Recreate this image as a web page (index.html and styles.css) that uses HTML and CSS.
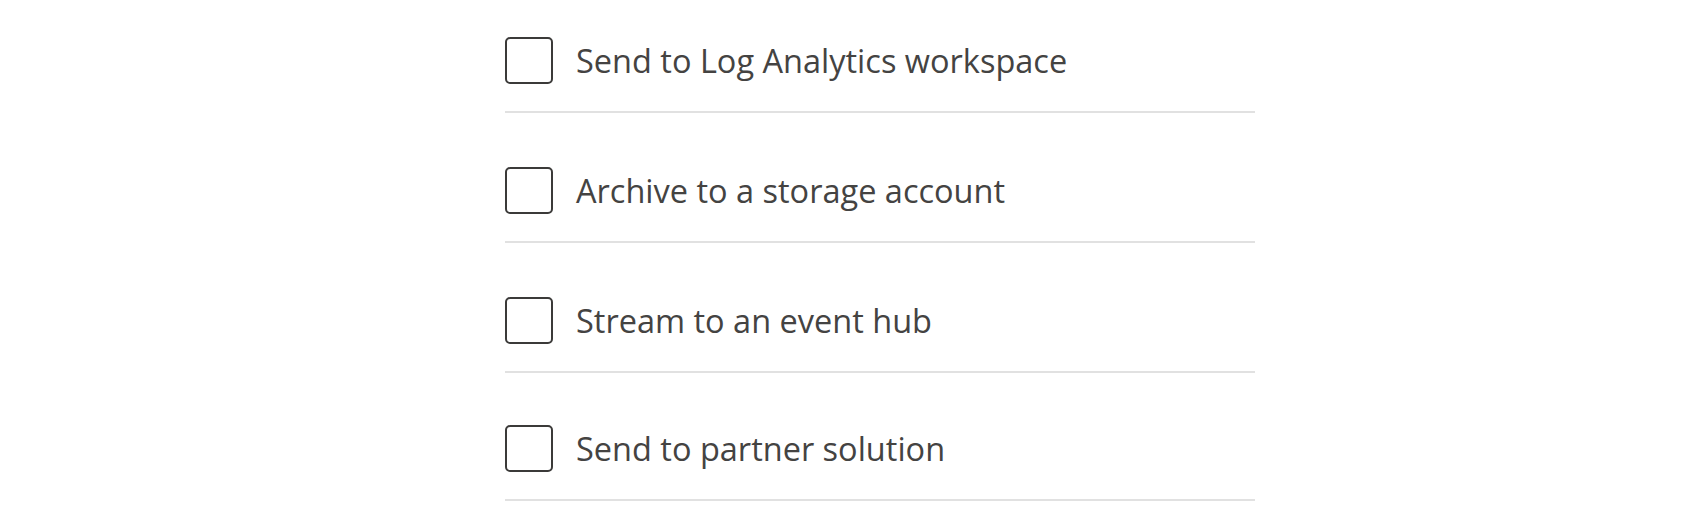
FILE: index.html
```html
<!DOCTYPE html>
<html lang="en">
<head>
  <meta charset="UTF-8">
  <meta name="viewport" content="width=device-width, initial-scale=1.0">
  <title>Destination details</title>
  <link rel="stylesheet" href="styles.css">
</head>
<body>
  <div class="destinations">
    <label class="option">
      <span class="box"></span>
      <span class="label-text">Send to Log Analytics workspace</span>
    </label>
    <label class="option">
      <span class="box"></span>
      <span class="label-text">Archive to a storage account</span>
    </label>
    <label class="option">
      <span class="box"></span>
      <span class="label-text">Stream to an event hub</span>
    </label>
    <label class="option">
      <span class="box"></span>
      <span class="label-text">Send to partner solution</span>
    </label>
  </div>
</body>
</html>
```

FILE: styles.css
```css
body {
  font-family: "Open Sans", "Noto Sans", sans-serif;
  background-color: #fff;
  color: #444342;
  margin: 0;
  padding: 0;
}

.destinations {
  width: 750px;
  margin-left: 505px;
}

.option {
  display: flex;
  align-items: center;
  gap: 23px;
  padding: 54px 0 27px;
  border-bottom: 2px solid #e1e1e1;
  cursor: pointer;
}

.option:first-child {
  padding-top: 37px;
}

.option:last-child {
  padding-top: 52px;
}

.box {
  width: 48px;
  height: 47px;
  box-sizing: border-box;
  border: 2.5px solid #3b3a39;
  border-radius: 5px;
  flex-shrink: 0;
}

.label-text {
  font-size: 32.5px;
  line-height: 40px;
}
```
